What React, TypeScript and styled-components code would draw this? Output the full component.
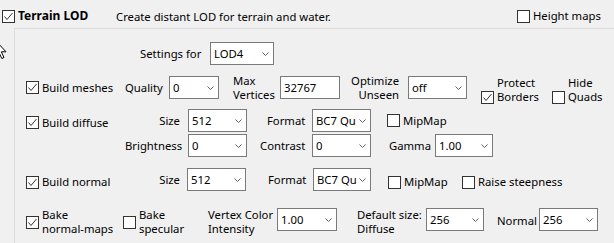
import React from "react";
import styled, { createGlobalStyle } from "styled-components";

const GlobalStyle = createGlobalStyle`
  html, body {
    margin: 0;
    padding: 0;
    background: #f0f0f0;
  }
  body {
    font-family: "Segoe UI", "Noto Sans", "Open Sans", sans-serif;
    font-size: 11.3px;
    color: #000;
  }
`;

const Page = styled.div`
  position: relative;
  width: 614px;
  height: 243px;
  overflow: hidden;
  background: #f0f0f0;
`;

const Header = styled.div`
  display: flex;
  align-items: center;
  height: 28px;
  box-sizing: border-box;
  padding: 4px 13px 0 2px;
`;

const Description = styled.span`
  flex: 1;
  white-space: nowrap;
`;

const Panel = styled.div`
  margin-left: 14px;
  width: 640px;
  height: 240px;
  box-sizing: border-box;
  border: 1px solid #dcdcdc;
`;

const Row = styled.div<{ $mt: number }>`
  display: flex;
  align-items: center;
  height: 23px;
  margin-top: ${(p) => p.$mt}px;
`;

const CheckWrap = styled.div<{ $w?: number; $ml?: number; $mt?: number; $end?: boolean; $bold?: boolean }>`
  display: flex;
  align-items: ${(p) => (p.$end ? "flex-end" : "center")};
  gap: 3px;
  flex: none;
  width: ${(p) => (p.$w ? `${p.$w}px` : "auto")};
  margin-left: ${(p) => p.$ml ?? 0}px;
  margin-top: ${(p) => p.$mt ?? 0}px;
  line-height: 14px;
  white-space: pre;
  font-weight: ${(p) => (p.$bold ? 700 : 400)};
  font-size: ${(p) => (p.$bold ? "12px" : "inherit")};
`;

const Box = styled.span`
  flex: none;
  width: 13px;
  height: 13px;
  box-sizing: border-box;
  border: 1px solid #333;
  background: #fff;
  display: flex;
`;

const Label = styled.span<{ $w: number; $ml?: number; $mt?: number; $right?: boolean }>`
  flex: none;
  width: ${(p) => p.$w}px;
  margin-left: ${(p) => p.$ml ?? 0}px;
  margin-top: ${(p) => p.$mt ?? 0}px;
  text-align: ${(p) => (p.$right ? "right" : "left")};
  line-height: 14px;
  white-space: pre;
`;

const Field = styled.div<{ $w: number; $ml?: number }>`
  flex: none;
  display: flex;
  align-items: center;
  gap: 3px;
  width: ${(p) => p.$w}px;
  height: 23px;
  margin-left: ${(p) => p.$ml ?? 0}px;
  box-sizing: border-box;
  border: 1px solid #7a7a7a;
  background: #fff;
  padding: 0 4px 0 3px;
`;

const FieldText = styled.span`
  flex: 1;
  min-width: 0;
  overflow: hidden;
  white-space: nowrap;
`;

const Chevron = styled.svg`
  flex: none;
  width: 7px;
  height: 4px;
`;

const Cursor = styled.svg`
  position: absolute;
  left: -5px;
  top: 40px;
`;

type CheckProps = {
  text: string;
  checked?: boolean;
  w?: number;
  ml?: number;
  mt?: number;
  end?: boolean;
  bold?: boolean;
};

const Check = ({ text, checked, w, ml, mt, end, bold }: CheckProps) => (
  <CheckWrap $w={w} $ml={ml} $mt={mt} $end={end} $bold={bold}>
    <Box>
      {checked && (
        <svg width="11" height="11" viewBox="0 0 11 11">
          <polyline points="1.5,5.5 4,8.5 9.5,2" fill="none" stroke="#333" strokeWidth="1" />
        </svg>
      )}
    </Box>
    <span>{text}</span>
  </CheckWrap>
);

const Combo = ({ value, w, ml }: { value: string; w: number; ml?: number }) => (
  <Field $w={w} $ml={ml}>
    <FieldText>{value}</FieldText>
    <Chevron viewBox="0 0 7 4">
      <polyline points="0.5,0.5 3.5,3.5 6.5,0.5" fill="none" stroke="#606060" strokeWidth="1" />
    </Chevron>
  </Field>
);

export default function App() {
  return (
    <Page>
      <GlobalStyle />
      <Header>
        <Check text="Terrain LOD" checked bold w={114} />
        <Description>Create distant LOD for terrain and water.</Description>
        <Check text="Height maps" w={84} />
      </Header>
      <Panel>
        <Row $mt={13}>
          <Label $w={70} $ml={125}>Settings for</Label>
          <Combo value="LOD4" w={64} />
        </Row>

        <Row $mt={11}>
          <Check text="Build meshes" checked ml={11} w={99} />
          <Label $w={44}>Quality</Label>
          <Combo value="0" w={50} />
          <Label $w={47} $ml={14}>{"Max\nVertices"}</Label>
          <Field $w={60}>
            <FieldText>32767</FieldText>
          </Field>
          <Label $w={59} $right>{"Optimize\nUnseen"}</Label>
          <Combo value="off" w={59} ml={9} />
          <Check text={"Protect\nBorders"} checked ml={14} w={71} mt={5} end />
          <Check text={"Hide\nQuads"} mt={5} end />
        </Row>

        <Row $mt={10}>
          <Check text="Build diffuse" checked ml={11} w={99} mt={4} />
          <Label $w={55} $right>Size</Label>
          <Combo value="512" w={59} ml={8} />
          <Label $w={45} $ml={20}>Format</Label>
          <Combo value="BC7 Quality" w={59} />
          <Check text="MipMap" ml={16} />
        </Row>

        <Row $mt={2}>
          <Label $w={55} $ml={110} $right>Brightness</Label>
          <Combo value="0" w={59} ml={8} />
          <Label $w={52} $ml={13}>Contrast</Label>
          <Combo value="0" w={59} />
          <Label $w={46} $ml={18}>Gamma</Label>
          <Combo value="1.00" w={58} />
        </Row>

        <Row $mt={11}>
          <Check text="Build normal" checked ml={11} w={99} mt={5} />
          <Label $w={55} $right>Size</Label>
          <Combo value="512" w={59} ml={7} />
          <Label $w={45} $ml={22}>Format</Label>
          <Combo value="BC7 Quality" w={58} />
          <Check text="MipMap" ml={17} w={74} mt={5} />
          <Check text="Raise steepness" mt={5} />
        </Row>

        <Row $mt={17}>
          <Check text={"Bake\nnormal-maps"} checked ml={11} w={97} mt={5} />
          <Check text={"Bake\nspecular"} w={85} mt={5} />
          <Label $w={69} $mt={5}>{"Vertex Color\nIntensity"}</Label>
          <Combo value="1.00" w={60} />
          <Label $w={69} $ml={20} $mt={5}>{"Default size:\nDiffuse"}</Label>
          <Combo value="256" w={58} />
          <Label $w={42} $ml={13} $mt={3}>Normal</Label>
          <Combo value="256" w={59} />
        </Row>
      </Panel>
      <Cursor width="12" height="19" viewBox="0 0 12 19">
        <path d="M0.5 0.5 V16 L4 12.5 L6.8 18.5 L9 17.5 L6.3 11.8 H11 Z" fill="#fff" stroke="#000" strokeWidth="1" />
      </Cursor>
    </Page>
  );
}
